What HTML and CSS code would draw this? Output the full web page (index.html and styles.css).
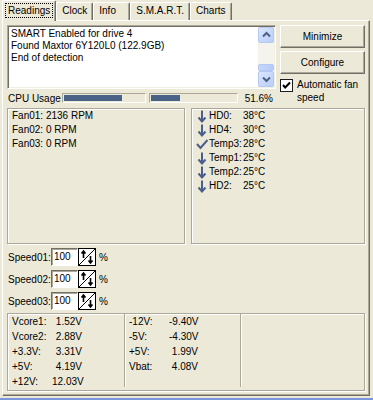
FILE: index.html
```html
<!DOCTYPE html>
<html lang="en">
<head>
    <meta charset="UTF-8">
    <title>SpeedFan - Readings</title>
    <link rel="stylesheet" href="styles.css">
</head>
<body>
    <div class="window">
        <!-- Tab strip -->
        <div class="tabs">
            <div class="tab active"><span class="focus">Readings</span></div>
            <div class="tab">Clock</div>
            <div class="tab">Info</div>
            <div class="tab">S.M.A.R.T.</div>
            <div class="tab">Charts</div>
        </div>

        <div class="page">
            <!-- Log + buttons -->
            <div class="top">
                <div class="top-left">
                    <div class="log">
                        <div class="log-text">SMART Enabled for drive 4<br>Found Maxtor 6Y120L0 (122.9GB)<br>End of detection</div>
                        <div class="scrollbar">
                            <div class="sb-btn">
                                <svg width="13" height="14" viewBox="0 0 13 14"><path d="M3 8.5 L6.5 5 L10 8.5" fill="none" stroke="#4D6185" stroke-width="2"/></svg>
                            </div>
                            <div class="sb-track"><div class="sb-thumb"></div></div>
                            <div class="sb-btn">
                                <svg width="13" height="14" viewBox="0 0 13 14"><path d="M3 5.5 L6.5 9 L10 5.5" fill="none" stroke="#4D6185" stroke-width="2"/></svg>
                            </div>
                        </div>
                    </div>
                    <div class="cpu">
                        <span class="cpu-label">CPU Usage</span>
                        <div class="bar bar-wide"><div class="fill" style="width: 73%"></div></div>
                        <div class="bar bar-narrow"><div class="fill" style="width: 34%"></div></div>
                        <span class="cpu-pct">51.6%</span>
                    </div>
                </div>
                <div class="top-right">
                    <button class="btn">Minimize</button>
                    <button class="btn">Configure</button>
                    <div class="check">
                        <span class="check-box">
                            <svg width="11" height="11" viewBox="0 0 11 11"><path d="M2 5 L4.2 7.5 L9 2.5" fill="none" stroke="#000" stroke-width="2"/></svg>
                        </span>
                        <span class="check-text">Automatic fan speed</span>
                    </div>
                </div>
            </div>

            <!-- Fans and temperatures -->
            <div class="readouts">
                <div class="panel fans">
                    <div>Fan01: 2136 RPM</div>
                    <div>Fan02: 0 RPM</div>
                    <div>Fan03: 0 RPM</div>
                </div>
                <div class="panel temps">
                    <div class="temp-row"><span class="ico down"></span><span>HD0:</span><span>38°C</span></div>
                    <div class="temp-row"><span class="ico down"></span><span>HD4:</span><span>30°C</span></div>
                    <div class="temp-row">
                        <span class="ico"><svg width="12" height="12" viewBox="0 0 12 12"><path d="M1 6 L4.5 10 L11.5 2" fill="none" stroke="#4A5E8E" stroke-width="2"/></svg></span>
                        <span>Temp3:</span><span>28°C</span>
                    </div>
                    <div class="temp-row"><span class="ico down"></span><span>Temp1:</span><span>25°C</span></div>
                    <div class="temp-row"><span class="ico down"></span><span>Temp2:</span><span>25°C</span></div>
                    <div class="temp-row"><span class="ico down"></span><span>HD2:</span><span>25°C</span></div>
                </div>
            </div>

            <!-- Fan speed controls -->
            <div class="speeds">
                <div class="speed-row">
                    <span class="speed-label">Speed01:</span>
                    <span class="speed-input">100</span>
                    <span class="spin"></span>
                    <span class="pct">%</span>
                </div>
                <div class="speed-row">
                    <span class="speed-label">Speed02:</span>
                    <span class="speed-input">100</span>
                    <span class="spin"></span>
                    <span class="pct">%</span>
                </div>
                <div class="speed-row">
                    <span class="speed-label">Speed03:</span>
                    <span class="speed-input">100</span>
                    <span class="spin"></span>
                    <span class="pct">%</span>
                </div>
            </div>

            <!-- Voltages -->
            <div class="panel volts">
                <div class="volt-col">
                    <span>Vcore1:</span><span class="v">1.52V</span>
                    <span>Vcore2:</span><span class="v">2.88V</span>
                    <span>+3.3V:</span><span class="v">3.31V</span>
                    <span>+5V:</span><span class="v">4.19V</span>
                    <span>+12V:</span><span class="v">12.03V</span>
                </div>
                <div class="volt-col">
                    <span>-12V:</span><span class="v">-9.40V</span>
                    <span>-5V:</span><span class="v">-4.30V</span>
                    <span>+5V:</span><span class="v">1.99V</span>
                    <span>Vbat:</span><span class="v">4.08V</span>
                </div>
                <div class="volt-col last"></div>
            </div>
        </div>
    </div>

    <script>
        // down-arrow icons for the temperature list
        const arrow = '<svg width="12" height="13" viewBox="0 0 12 13"><path d="M6 0.5 V11" stroke="#4A5E8E" stroke-width="2"/><path d="M2.5 7.5 L6 11.5 L9.5 7.5" fill="none" stroke="#4A5E8E" stroke-width="2"/></svg>';
        document.querySelectorAll('.ico.down').forEach(el => el.innerHTML = arrow);

        // up/down spinner glyph next to each speed box
        const spin = '<svg width="18" height="18" viewBox="0 0 18 18"><path d="M17 1 L1 17" stroke="#000" stroke-width="1"/><path d="M5.5 3 V10 M3.5 5.5 L5.5 3 L7.5 5.5" fill="none" stroke="#000" stroke-width="1.6"/><path d="M12.5 8 V15 M10.5 12.5 L12.5 15 L14.5 12.5" fill="none" stroke="#000" stroke-width="1.6"/></svg>';
        document.querySelectorAll('.spin').forEach(el => el.innerHTML = spin);
    </script>
</body>
</html>
```

FILE: styles.css
```css
/* General Styling */
html, body {
    margin: 0;
    background-color: #ECE9D8;
}
body {
    width: 373px;
    height: 400px;
    overflow: hidden;
    font-family: "Liberation Sans", Arial, sans-serif;
    font-size: 10px;
    color: #000;
    border-bottom: 2px solid #7A96DF;
    box-sizing: border-box;
}
.window {
    padding: 0 3px 0 2px;
}

/* Tabs */
.tabs {
    display: flex;
    align-items: flex-end;
    height: 20px;
}
.tab {
    box-sizing: border-box;
    height: 18px;
    min-width: 37px;
    padding: 0 5px;
    line-height: 16px;
    border-top: 1px solid #fff;
    border-left: 1px solid #fff;
    border-right: 1px solid #716F64;
    border-radius: 2px 2px 0 0;
    box-shadow: inset -1px 0 #ACA899;
}
.tab.active {
    position: relative;
    z-index: 1;
    height: 21px;
    margin-bottom: -1px;
    padding: 2px 3px 0 3px;
    background-color: #ECE9D8;
}
.focus {
    display: inline-block;
    line-height: 13px;
    padding: 0 2px;
    outline: 1px dotted #000;
}

/* Tab page */
.page {
    box-sizing: border-box;
    height: 376px;
    padding: 4px 4px 0 4px;
    border: 1px solid;
    border-color: #fff #716F64 #716F64 #fff;
    box-shadow: inset -1px -1px #ACA899;
}

/* Log + buttons */
.top {
    display: flex;
    gap: 4px;
}
.top-left {
    width: 269px;
}
.log {
    box-sizing: border-box;
    height: 64px;
    display: flex;
    background-color: #fff;
    border: 1px solid;
    border-color: #ACA899 #fff #fff #ACA899;
    box-shadow: inset 1px 1px #716F64, inset -1px -1px #F1EFE2;
    padding: 1px;
}
.log-text {
    flex: 1;
    padding: 1px 2px;
    line-height: 12px;
}
.scrollbar {
    width: 16px;
    display: flex;
    flex-direction: column;
    background-color: #F4F3EE;
}
.sb-btn {
    box-sizing: border-box;
    height: 16px;
    display: flex;
    align-items: center;
    justify-content: center;
    background: linear-gradient(135deg, #DCE6FD, #B9CDF9);
    border: 1px solid #B4C8F6;
    border-radius: 2px;
}
.sb-track {
    flex: 1;
    display: flex;
    flex-direction: column;
    justify-content: flex-end;
}
.sb-thumb {
    height: 7px;
    background: linear-gradient(90deg, #C8D7FB, #B6CBF8);
    border: 1px solid #B4C8F6;
    border-radius: 2px;
    box-sizing: border-box;
}

.cpu {
    display: flex;
    align-items: center;
    height: 12px;
    margin-top: 3px;
}
.cpu-label {
    width: 54px;
    padding-left: 1px;
}
.bar {
    box-sizing: border-box;
    height: 10px;
    padding: 1px;
    border: 1px solid;
    border-color: #ACA899 #fff #fff #ACA899;
}
.bar-wide {
    width: 84px;
}
.bar-narrow {
    width: 89px;
    margin-left: 3px;
}
.fill {
    height: 100%;
    background-color: #4A6286;
}
.cpu-pct {
    margin-left: auto;
    padding-right: 3px;
}

.top-right {
    flex: 1;
    display: flex;
    flex-direction: column;
    gap: 3px;
}
.btn {
    height: 23px;
    margin: 0;
    padding: 0;
    font: inherit;
    color: #000;
    background-color: #ECE9D8;
    border: 1px solid;
    border-color: #fff #716F64 #716F64 #fff;
    box-shadow: inset -1px -1px #ACA899;
}
.check {
    display: flex;
    align-items: flex-start;
    gap: 4px;
}
.check-box {
    box-sizing: border-box;
    width: 13px;
    height: 13px;
    margin-top: 2px;
    display: flex;
    align-items: center;
    justify-content: center;
    background-color: #fff;
    border: 1px solid #1C1C1C;
}
.check-text {
    line-height: 13px;
    padding-top: 1px;
}

/* Fans and temps */
.readouts {
    display: flex;
    gap: 6px;
    margin-top: 4px;
}
.panel {
    box-sizing: border-box;
    border: 1px solid #ACA899;
    box-shadow: inset 1px 1px #fff, 1px 1px #fff;
}
.fans, .temps {
    height: 136px;
    line-height: 14px;
}
.fans {
    width: 178px;
    padding: 0 4px;
}
.temps {
    flex: 1;
    padding: 0 3px;
}
.temp-row {
    display: grid;
    grid-template-columns: 14px 34px auto;
    align-items: center;
    height: 14px;
}
.ico {
    display: flex;
    align-items: center;
    justify-content: center;
    height: 14px;
}

/* Speeds */
.speeds {
    display: flex;
    flex-direction: column;
    gap: 4px;
    margin-top: 4px;
}
.speed-row {
    display: flex;
    align-items: center;
    height: 18px;
}
.speed-label {
    width: 43px;
    padding-left: 1px;
}
.speed-input {
    box-sizing: border-box;
    width: 27px;
    height: 18px;
    line-height: 14px;
    padding: 1px 2px;
    background-color: #fff;
    border: 1px solid;
    border-color: #716F64 #fff #fff #716F64;
    box-shadow: inset 1px 1px #ACA899;
}
.spin {
    box-sizing: border-box;
    width: 18px;
    height: 18px;
    background-color: #fff;
    border: 1px solid #000;
}
.spin svg {
    display: block;
    margin: -1px;
}
.pct {
    margin-left: 3px;
}

/* Voltages */
.volts {
    display: flex;
    height: 78px;
    margin-top: 3px;
    padding: 0 0 3px 0;
}
.volt-col {
    display: grid;
    grid-template-columns: 40px 30px;
    grid-auto-rows: 15px;
    align-items: center;
    align-content: start;
    width: 117px;
    padding-left: 4px;
    box-sizing: border-box;
    border-right: 1px solid #ACA899;
    box-shadow: 1px 0 #fff;
}
.volt-col + .volt-col {
    width: 116px;
    grid-template-columns: 40px 29px;
}
.volt-col.last {
    flex: 1;
    border-right: none;
    box-shadow: none;
}
.v {
    text-align: right;
}
```
